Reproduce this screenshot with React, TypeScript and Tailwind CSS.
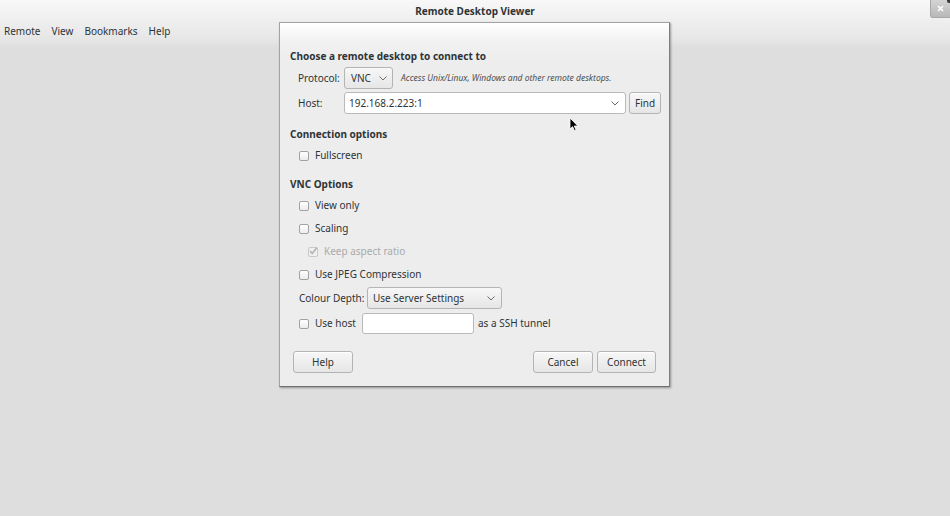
import React from "react";

const font = { fontFamily: '"Noto Sans", "DejaVu Sans", sans-serif' };

function Chevron() {
  return (
    <svg width="8" height="5" viewBox="0 0 8 5" className="shrink-0">
      <path d="M0.5 0.5 L4 4 L7.5 0.5" fill="none" stroke="#6b6b6b" strokeWidth="1" />
    </svg>
  );
}

function Check({ disabled, checked }: { disabled?: boolean; checked?: boolean }) {
  return (
    <div
      className={
        "w-[10px] h-[10px] rounded-[2px] border shrink-0 relative " +
        (disabled ? "border-[#c9c9c9] bg-[#f0f0f0]" : "border-[#a3a3a3] bg-[linear-gradient(#ffffff,#ececec)]")
      }
    >
      {checked && (
        <svg width="10" height="10" viewBox="0 0 10 10" className="absolute left-[-1px] top-[-2px]">
          <path d="M2 5 L4.2 7.5 L9 1.5" fill="none" stroke="#b3b3b3" strokeWidth="1.6" />
        </svg>
      )}
    </div>
  );
}

function CheckRow({ label, disabled, checked, indent }: { label: string; disabled?: boolean; checked?: boolean; indent?: boolean }) {
  return (
    <div className={"h-[23px] flex items-center gap-[6px] whitespace-nowrap " + (indent ? "pl-[18px]" : "pl-[9px]")}>
      <Check disabled={disabled} checked={checked} />
      <span className={disabled ? "text-[#a9abab]" : ""}>{label}</span>
    </div>
  );
}

function Btn({ children, w }: { children: React.ReactNode; w: string }) {
  return (
    <div
      className={
        "h-[22px] shrink-0 flex items-center justify-center rounded-[3px] border border-[#b4b4b4] bg-[linear-gradient(#f7f7f7,#e6e6e6)] shadow-[inset_0_1px_0_#ffffff] " +
        w
      }
    >
      {children}
    </div>
  );
}

export default function App() {
  return (
    <div
      className="relative w-[950px] h-[516px] overflow-hidden text-[10px] text-[#2e3436] whitespace-nowrap bg-[linear-gradient(#f8f8f8_0px,#e6e6e6_40px,#dedede_48px,#dedede_100%)]"
      style={font}
    >
      {/* title */}
      <div className="h-[23px] flex items-center justify-center font-bold text-[#2e3436]">
        Remote Desktop Viewer
      </div>
      {/* menu */}
      <div className="h-[17px] flex items-center pl-[4px] gap-[11px]">
        <span>Remote</span>
        <span>View</span>
        <span>Bookmarks</span>
        <span>Help</span>
      </div>

      {/* close button */}
      <div className="absolute right-0 top-0 w-[20px] h-[18px] rounded-bl-[3px] border-l border-b border-[#a8a8a8] bg-[linear-gradient(#d4d4d4,#b8b8b8)] flex items-center justify-center">
        <svg width="7" height="7" viewBox="0 0 7 7">
          <path d="M1 1 L6 6 M6 1 L1 6" stroke="#ffffff" strokeWidth="1.6" />
        </svg>
      </div>
      <div className="absolute right-0 top-0 w-[3px] h-[3px] bg-[#3a3a3a] rounded-bl-[2px]" />

      {/* dialog */}
      <div className="absolute left-[279px] top-[22px] w-[391px] h-[365px] border border-[#a3a3a3] border-r-[#7d7d7d] border-b-[#6f6f6f] shadow-[1px_1px_2px_rgba(0,0,0,0.35)] bg-[linear-gradient(#ffffff_0px,#f1f1f1_18px,#ededed_40px,#ededed_100%)] flex flex-col pl-[10px] pr-[8px] pt-[26px]">
        <div className="h-[14px] leading-[14px] font-bold">Choose a remote desktop to connect to</div>

        <div className="mt-[4px] h-[22px] flex items-center pl-[8px]">
          <span className="w-[46px] shrink-0">Protocol:</span>
          <div className="w-[49px] shrink-0 h-[22px] rounded-[3px] border border-[#b4b4b4] bg-[linear-gradient(#f7f7f7,#e6e6e6)] flex items-center justify-between pl-[6px] pr-[5px]">
            <span>VNC</span>
            <Chevron />
          </div>
          <span className="ml-[8px] italic text-[8.5px] text-[#4a4f50]">
            Access Unix/Linux, Windows and other remote desktops.
          </span>
        </div>

        <div className="mt-[3px] h-[22px] flex items-center pl-[8px]">
          <span className="w-[46px] shrink-0">Host:</span>
          <div className="w-[282px] shrink-0 h-[22px] rounded-[3px] border border-[#b9b9b9] bg-white flex items-center justify-between pl-[4px] pr-[6px]">
            <span>192.168.2.223:1</span>
            <Chevron />
          </div>
          <div className="ml-[3px]">
            <Btn w="w-[32px]">Find</Btn>
          </div>
        </div>

        <div className="mt-[13px] h-[14px] leading-[14px] font-bold">Connection options</div>
        <div className="mt-[3px]">
          <CheckRow label="Fullscreen" />
        </div>

        <div className="mt-[10px] h-[14px] leading-[14px] font-bold">VNC Options</div>
        <div className="mt-[3px] flex flex-col">
          <CheckRow label="View only" />
          <CheckRow label="Scaling" />
          <CheckRow label="Keep aspect ratio" disabled checked indent />
          <CheckRow label="Use JPEG Compression" />
        </div>

        <div className="mt-[1px] h-[22px] flex items-center pl-[9px]">
          <span className="w-[68px] shrink-0">Colour Depth:</span>
          <div className="w-[135px] shrink-0 h-[22px] rounded-[3px] border border-[#b4b4b4] bg-[linear-gradient(#f7f7f7,#e6e6e6)] flex items-center justify-between pl-[5px] pr-[6px]">
            <span>Use Server Settings</span>
            <Chevron />
          </div>
        </div>

        <div className="mt-[4px] h-[21px] flex items-center pl-[9px]">
          <Check />
          <span className="ml-[6px] w-[47px] shrink-0">Use host</span>
          <div className="w-[112px] shrink-0 h-[21px] rounded-[3px] border border-[#b9b9b9] bg-white" />
          <span className="ml-[4px]">as a SSH tunnel</span>
        </div>

        <div className="mt-[17px] flex items-center pl-[3px] pr-[5px]">
          <Btn w="w-[60px]">Help</Btn>
          <div className="flex-1" />
          <Btn w="w-[60px]">Cancel</Btn>
          <div className="w-[4px] shrink-0" />
          <Btn w="w-[59px]">Connect</Btn>
        </div>
      </div>

      {/* mouse cursor */}
      <svg className="absolute left-[569px] top-[117px]" width="10" height="15" viewBox="0 0 10 15">
        <path d="M1 1 L1 12 L3.6 9.6 L5.4 13.6 L7 12.9 L5.3 9 L8.8 9 Z" fill="#000000" stroke="#ffffff" strokeWidth="0.8" />
      </svg>
    </div>
  );
}
